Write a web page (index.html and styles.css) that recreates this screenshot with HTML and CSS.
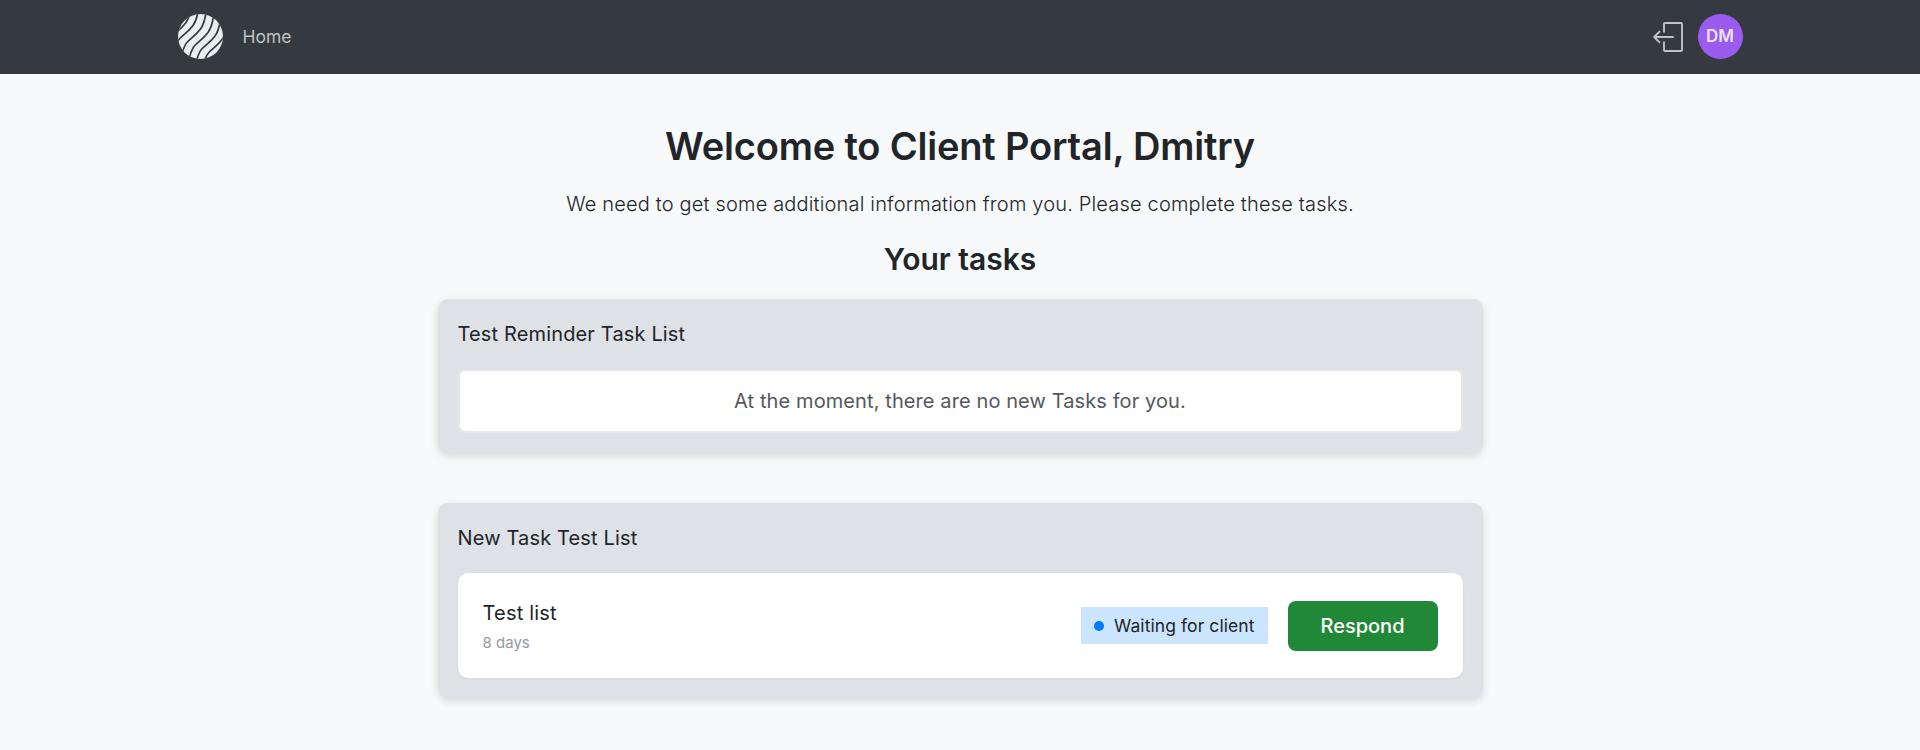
FILE: index.html
```html
<!DOCTYPE html>
<html lang="en">
<head>
<meta charset="utf-8">
<title>Client Portal</title>
<link rel="stylesheet" href="styles.css">
</head>
<body>
<header class="navbar">
  <div class="navbar-inner">
    <svg class="logo" viewBox="0 0 45 45">
      <defs>
        <clipPath id="disc"><circle cx="22.5" cy="22.5" r="22.5"/></clipPath>
        <path id="wave" d="M9 52C12 44 12 36 17.300 31C22 26.500 26 24 30 18.500C36 10 34 4 38 -8"/>
      </defs>
      <g clip-path="url(#disc)">
        <rect width="45" height="45" fill="#e9eef3"/>
        <g fill="none" stroke="#343a40" stroke-width="1.7">
          <use href="#wave" x="-22" y="-10"/>
          <use href="#wave" x="-15" y="-7"/>
          <use href="#wave" x="-7.500" y="-3.500"/>
          <use href="#wave"/>
          <use href="#wave" x="7" y="3.500"/>
          <use href="#wave" x="14" y="7"/>
          <use href="#wave" x="21" y="11"/>
        </g>
      </g>
    </svg>
    <a class="nav-link">Home</a>
    <svg class="logout" viewBox="0 0 30 30" fill="none" stroke="#c0c2c4" stroke-width="1.9" stroke-linecap="butt" stroke-linejoin="round">
      <path d="M11 10.500V2C11 1.300 11.300 1 12 1H28C28.700 1 29 1.300 29 2V28C29 28.700 28.700 29 28 29H12C11.300 29 11 28.700 11 28V19.500"/>
      <path d="M20 15H1.200M6.500 9.700L1.200 15L6.500 20.300" stroke-linecap="round"/>
    </svg>
    <div class="avatar">DM</div>
  </div>
</header>
<main class="content">
  <h1 class="title">Welcome to Client Portal, Dmitry</h1>
  <p class="lead">We need to get some additional information from you. Please complete these tasks.</p>
  <h2 class="subtitle">Your tasks</h2>
  <section class="card">
    <h3 class="card-title">Test Reminder Task List</h3>
    <div class="empty">At the moment, there are no new Tasks for you.</div>
  </section>
  <section class="card">
    <h3 class="card-title">New Task Test List</h3>
    <div class="task">
      <div class="task-info">
        <div class="task-name">Test list</div>
        <div class="task-age">8 days</div>
      </div>
      <div class="status"><span class="dot"></span>Waiting for client</div>
      <button class="respond">Respond</button>
    </div>
  </section>
</main>
</body>
</html>
```
FILE: styles.css
```css
* { box-sizing: border-box; }
body {
  margin: 0;
  background: #f8f9fb;
  color: #212529;
  font-family: Inter, "Liberation Sans", sans-serif;
  letter-spacing: 0.15px;
}
h1, h2, h3, p { margin: 0; }
.navbar { height: 74px; background: #343a40; }
.navbar-inner {
  width: 1565px;
  height: 73px;
  margin: 0 auto;
  display: flex;
  align-items: center;
}
.logo { width: 45px; height: 45px; margin-right: 20px; }
.nav-link { font-size: 17.5px; letter-spacing: 0; color: #c0c2c4; margin-right: auto; }
.logout { width: 30px; height: 30px; margin-right: 15px; }
.avatar {
  width: 45px;
  height: 45px;
  border-radius: 50%;
  background: #9b5bee;
  color: #ebe3f8;
  font-size: 17px;
  font-weight: 600;
  letter-spacing: 0;
  line-height: 45px;
  text-align: center;
}
.content {
  width: 1045px;
  margin: 0 auto;
  padding-top: 48px;
  text-align: center;
}
.title { font-size: 38px; font-weight: 600; line-height: 48px; letter-spacing: -0.18px; }
.lead { font-size: 20px; font-weight: 300; line-height: 30px; margin-top: 19px; white-space: nowrap; letter-spacing: 0.17px; }
.subtitle { font-size: 30px; font-weight: 600; line-height: 36px; margin: 22px 0 22px; letter-spacing: 0; }
.card {
  background: #dee1e6;
  border-radius: 10px;
  box-shadow: 0 3px 8px rgba(0, 0, 0, 0.14);
  padding: 20px;
  margin-bottom: 50px;
}
.card-title { font-size: 20px; font-weight: 400; line-height: 30px; text-align: left; margin-bottom: 20px; }
.empty {
  height: 64px;
  border: 2px solid #e5e7eb;
  border-radius: 7px;
  background: #fff;
  background-clip: padding-box;
  color: #54585d;
  font-size: 20px;
  line-height: 60px;
  letter-spacing: 0.1px;
}
.task {
  height: 105px;
  border-radius: 10px;
  background: #fff;
  box-shadow: 0 1px 3px rgba(0, 0, 0, 0.06);
  padding: 0 25px;
  display: flex;
  align-items: center;
}
.task-info { margin-right: auto; text-align: left; }
.task-name { font-size: 20px; line-height: 30px; letter-spacing: 0.2px; }
.task-age { font-size: 15px; line-height: 22px; margin-top: 4px; letter-spacing: 0; color: #939a9f; }
.status {
  width: 187px;
  height: 37px;
  background: #cce5ff;
  display: flex;
  align-items: center;
  padding-left: 13px;
  font-size: 17.5px;
  letter-spacing: 0.08px;
  white-space: nowrap;
  margin-right: 20px;
}
.dot { width: 10px; height: 10px; border-radius: 50%; background: #007bff; margin-right: 10.5px; }
.respond {
  width: 150px;
  height: 50px;
  border: 0;
  border-radius: 8px;
  background: #218838;
  color: #fff;
  font: 500 20px Inter, sans-serif;
  padding: 0;
}
```
